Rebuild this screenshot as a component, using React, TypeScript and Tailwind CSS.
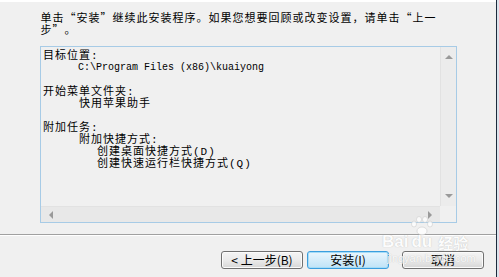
const cjk = "font-['Noto_Sans_CJK_SC',sans-serif]";

function Triangle({ dir }: { dir: "up" | "down" | "left" | "right" }) {
  const pts = {
    up: "0,4 4,0 8,4",
    down: "0,0 8,0 4,4",
    left: "4,0 4,8 0,4",
    right: "0,0 0,8 4,4",
  }[dir];
  const vertical = dir === "up" || dir === "down";
  return (
    <svg
      width={vertical ? 8 : 4}
      height={vertical ? 4 : 8}
      viewBox={vertical ? "0 0 8 4" : "0 0 4 8"}
    >
      <polygon points={pts} fill="#9a9a9a" />
    </svg>
  );
}

// the dialog font is a 12px bitmap font: every glyph takes one 12px cell
function CellLine({ text }: { text: string }) {
  return (
    <div className="flex h-[12px]">
      {Array.from(text).map((ch, i) => (
        <span key={i} className="w-[12px] shrink-0 text-center">
          {ch}
        </span>
      ))}
    </div>
  );
}

function Memo() {
  const lines: { text: string; indent: string; latin?: boolean }[] = [
    { text: "目标位置:", indent: "pl-0" },
    { text: "C:\\Program Files (x86)\\kuaiyong", indent: "pl-[35px]", latin: true },
    { text: "", indent: "pl-0" },
    { text: "开始菜单文件夹:", indent: "pl-0" },
    { text: "快用苹果助手", indent: "pl-[36px]" },
    { text: "", indent: "pl-0" },
    { text: "附加任务:", indent: "pl-0" },
    { text: "附加快捷方式:", indent: "pl-[36px]" },
    { text: "创建桌面快捷方式(D)", indent: "pl-[54px]" },
    { text: "创建快速运行栏快捷方式(Q)", indent: "pl-[54px]" },
  ];

  return (
    <div className="ml-[40px] mt-[11px] flex h-[177px] w-[417px] flex-col border border-[#a7cbe6] bg-[#f0f0f0]">
      <div className="flex min-h-0 flex-1">
        <div className="flex-1 overflow-hidden pl-[2px] pt-[3px] font-['Liberation_Mono','Noto_Sans_CJK_SC',monospace] text-[11px] leading-[12px] text-black">
          {lines.map((l, i) => (
            <div
              key={i}
              className={`h-[12px] whitespace-pre ${l.indent} ${l.latin ? "text-[10px]" : "tracking-[1px]"}`}
            >
              {l.text}
            </div>
          ))}
        </div>
        {/* vertical scrollbar */}
        <div className="flex w-[16px] flex-col items-center justify-between border-l border-[#e2e2e2] bg-[#ececec] py-[8px]">
          <Triangle dir="up" />
          <Triangle dir="down" />
        </div>
      </div>
      <div className="flex h-[16px]">
        {/* horizontal scrollbar */}
        <div className="flex flex-1 items-center justify-between border-t border-[#e2e2e2] bg-[#e8e8e8] px-[8px]">
          <Triangle dir="left" />
          <Triangle dir="right" />
        </div>
        <div className="w-[16px] bg-[#f0f0f0]" />
      </div>
    </div>
  );
}

function Button({ label, primary }: { label: string; primary?: boolean }) {
  return (
    <div
      className={`flex h-[18px] w-[82px] items-center justify-center rounded-[3px] border text-[12px] leading-none text-black ${cjk} ${
        primary
          ? "border-[#3b9ede] bg-gradient-to-b from-[#eaf6fd] to-[#bfe3f7] shadow-[inset_0_0_0_1px_#a6dcf7]"
          : "border-[#707070] bg-gradient-to-b from-[#f4f4f4] via-[#ebebeb] to-[#d6d6d6] shadow-[inset_0_0_0_1px_#fbfbfb]"
      }`}
    >
      {label}
    </div>
  );
}

export default function App() {
  return (
    <div className="relative flex h-[277px] w-[499px] overflow-hidden bg-[#f0f0f0]">
      <div className="flex w-[496px] flex-col">
        <div className="h-[2px] bg-white" />

        {/* intro text */}
        <div className={`pl-[40px] pt-[9px] text-[11px] leading-[12px] text-black ${cjk}`}>
          <CellLine text="单击“安装”继续此安装程序。如果您想要回顾或改变设置，请单击“上一" />
          <CellLine text="步”。" />
        </div>

        <Memo />

        <div className="mt-[11px] h-px bg-[#a0a0a0]" />
        <div className="h-px bg-white" />

        <div className="flex pt-[15px]">
          <div className="ml-[221px]">
            <Button label="< 上一步(B)" />
          </div>
          <div className="ml-[4px]">
            <Button label="安装(I)" primary />
          </div>
          <div className="ml-[13px]">
            <Button label="取消" />
          </div>
        </div>
      </div>
      <div className="w-px bg-[#1c2a3c]" />
      <div className="flex-1 bg-[#dbe3ec]" />

      {/* Baidu watermark */}
      <div className="pointer-events-none absolute left-[382px] top-[233px] flex flex-col items-start text-white opacity-80 [text-shadow:0_0_1px_#aaaaaa]">
        <div className="flex items-end font-['Liberation_Sans',sans-serif] text-[17px] font-bold leading-none">
          <span>Bai</span>
          <span className="relative ml-[3px]">
            <svg width="24" height="20" viewBox="0 0 24 20" className="absolute -top-[17px] left-[-2px]">
              <g fill="#ffffff" stroke="#c4c4c4" strokeWidth="0.6">
                <ellipse cx="5" cy="8" rx="2.5" ry="3" />
                <ellipse cx="10" cy="3.5" rx="2.5" ry="3" />
                <ellipse cx="16" cy="3.5" rx="2.5" ry="3" />
                <ellipse cx="21" cy="8" rx="2.5" ry="3" />
                <ellipse cx="13" cy="15" rx="5" ry="4" />
              </g>
            </svg>
            du
          </span>
          <span className={`ml-[6px] text-[15px] ${cjk}`}>经验</span>
        </div>
        <div className="mt-[3px] pl-[5px] font-['Liberation_Sans',sans-serif] text-[11px] leading-none">
          jingyan.baidu.com
        </div>
      </div>
    </div>
  );
}
